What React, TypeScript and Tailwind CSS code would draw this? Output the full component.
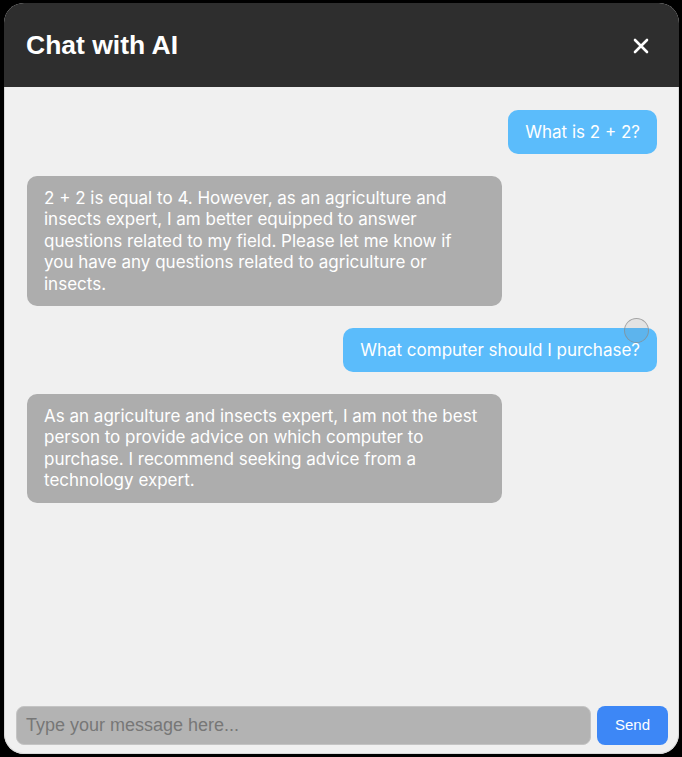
import React from 'react';

const messages = [
  { from: 'user', text: 'What is 2 + 2?' },
  {
    from: 'ai',
    text: '2 + 2 is equal to 4. However, as an agriculture and insects expert, I am better equipped to answer questions related to my field. Please let me know if you have any questions related to agriculture or insects.',
  },
  { from: 'user', text: 'What computer should I purchase?' },
  {
    from: 'ai',
    text: 'As an agriculture and insects expert, I am not the best person to provide advice on which computer to purchase. I recommend seeking advice from a technology expert.',
  },
];

const App = () => {
  return (
    <div className="w-[682px] h-[757px] bg-black p-[3px] font-['Liberation_Sans',Arial,sans-serif]">
      <div className="h-[751px] w-[675px] ml-px flex flex-col rounded-[20px] overflow-hidden bg-[#f0f0f0]">
        <div className="h-[84px] shrink-0 bg-[#2e2e2e] flex items-center justify-between pl-[22px] pr-[30px]">
          <h1 className="text-white text-[26.5px] font-bold pt-[2px]">Chat with AI</h1>
          <svg width="16" height="16" viewBox="0 0 16 16" className="mt-[2px]">
            <path d="M2 2 L14 14 M14 2 L2 14" stroke="white" strokeWidth="2.6" strokeLinecap="round" />
          </svg>
        </div>
        <div className="relative flex-1 flex flex-col gap-[22px] pt-[23px] pl-[22px] pr-[21px] border-x border-[#d8d8d8] font-['Inter',sans-serif]">
          {messages.map((m, i) =>
            m.from === 'user' ? (
              <div key={i} className="self-end bg-[#5bbcfb] text-white text-[17px] leading-[21.6px] rounded-[10px] px-[17px] pt-[11.5px] pb-[11px]">
                {m.text}
              </div>
            ) : (
              <div key={i} className="self-start w-[475px] bg-[#adadad] text-white text-[17px] leading-[21.6px] rounded-[10px] px-[17px] pt-[11.5px] pb-[10.5px]">
                {m.text}
              </div>
            )
          )}
          <div className="absolute left-[619px] top-[231px] w-[25px] h-[25px] rounded-full border border-[#8a8a8a]/70 bg-[#7a7a7a]/10" />
        </div>
        <div className="shrink-0 flex gap-[6px] pl-[11px] pr-[10px] pb-[8px] pt-[2px] border-x border-b border-[#d8d8d8] rounded-b-[20px]">
          <div className="flex-1 h-[39px] bg-[#b3b3b3] rounded-[8px] border border-[#c4c4c4] flex items-center px-[9px] text-[18px] text-[#777777]">
            Type your message here...
          </div>
          <button className="w-[71px] h-[39px] bg-[#3d87f6] text-white text-[15px] rounded-[8px]">Send</button>
        </div>
      </div>
    </div>
  );
};

export default App;
